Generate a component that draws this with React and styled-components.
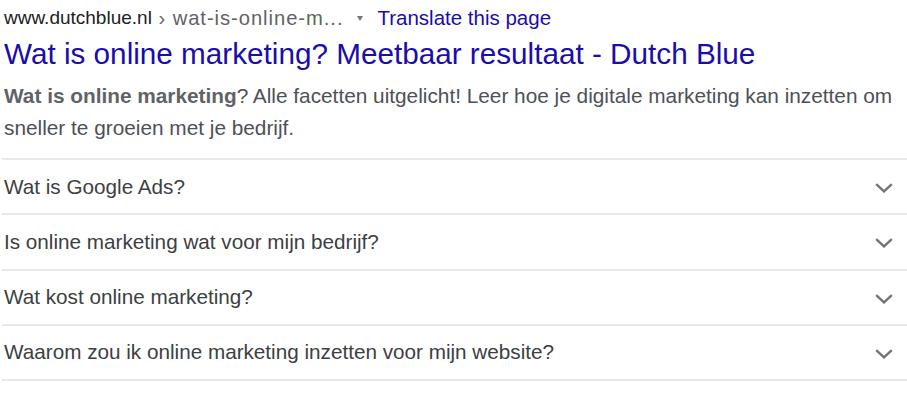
import React from "react";
import styled, { createGlobalStyle } from "styled-components";

const questions = [
  "Wat is Google Ads?",
  "Is online marketing wat voor mijn bedrijf?",
  "Wat kost online marketing?",
  "Waarom zou ik online marketing inzetten voor mijn website?"
];

export default function App() {
  return (
    <>
      <GlobalStyle />
      <Result>
        <Cite>
          <Domain>www.dutchblue.nl</Domain>
          <Path> › wat-is-online-m...</Path>
          <Caret />
          <Translate href="#">Translate this page</Translate>
        </Cite>

        <Title href="#">Wat is online marketing? Meetbaar resultaat - Dutch Blue</Title>

        <Snippet>
          <em>Wat is online marketing</em>? Alle facetten uitgelicht! Leer hoe je
          digitale marketing kan inzetten om sneller te groeien met je bedrijf.
        </Snippet>

        <Faq>
          {questions.map((q) => (
            <Question key={q}>
              <span>{q}</span>
              <Chevron viewBox="0 0 18 10">
                <path d="M1.2 1.2 L9 8.4 L16.8 1.2" />
              </Chevron>
            </Question>
          ))}
        </Faq>
      </Result>
    </>
  );
}

const GlobalStyle = createGlobalStyle`
  body {
    margin: 0;
    background: #ffffff;
    font-family: "Liberation Sans", Arial, sans-serif;
  }
`;

const Result = styled.div`
  width: 907px;
  padding-left: 2px;
  box-sizing: border-box;
`;

const Cite = styled.div`
  display: flex;
  align-items: center;
  padding: 6px 0 0 2px;
  height: 24px;
  line-height: 24px;
  white-space: nowrap;
`;

const Domain = styled.span`
  font-size: 19px;
  color: #202124;
`;

const Path = styled.span`
  font-size: 20.2px;
  letter-spacing: 0.95px;
  color: #5f6368;
  white-space: pre;
`;

const Caret = styled.span`
  width: 0;
  height: 0;
  margin: 1px 14px 0 14px;
  border-left: 3.5px solid transparent;
  border-right: 3.5px solid transparent;
  border-top: 5px solid #70757a;
`;

const Translate = styled.a`
  font-size: 20.5px;
  color: #1a0dab;
  text-decoration: none;
`;

const Title = styled.a`
  display: block;
  margin: 6px 0 0 2px;
  font-size: 29.7px;
  line-height: 36px;
  color: #1a0dab;
  text-decoration: none;
  white-space: nowrap;
`;

const Snippet = styled.div`
  margin: 8px 0 0 2px;
  font-size: 20.8px;
  line-height: 32px;
  color: #4d5156;

  em {
    font-style: normal;
    font-weight: bold;
    color: #5f6368;
  }
`;

const Faq = styled.div`
  margin-top: 14px;
  border-top: 2px solid #e8e8e8;
`;

const Question = styled.div`
  display: flex;
  align-items: center;
  justify-content: space-between;
  height: 53.25px;
  padding: 0 14px 0 2px;
  border-bottom: 2px solid #e8e8e8;
  font-size: 20.7px;
  color: #3c4043;
`;

const Chevron = styled.svg`
  width: 18px;
  height: 10px;
  margin-top: 3px;
  fill: none;
  stroke: #70757a;
  stroke-width: 2.4;
`;
